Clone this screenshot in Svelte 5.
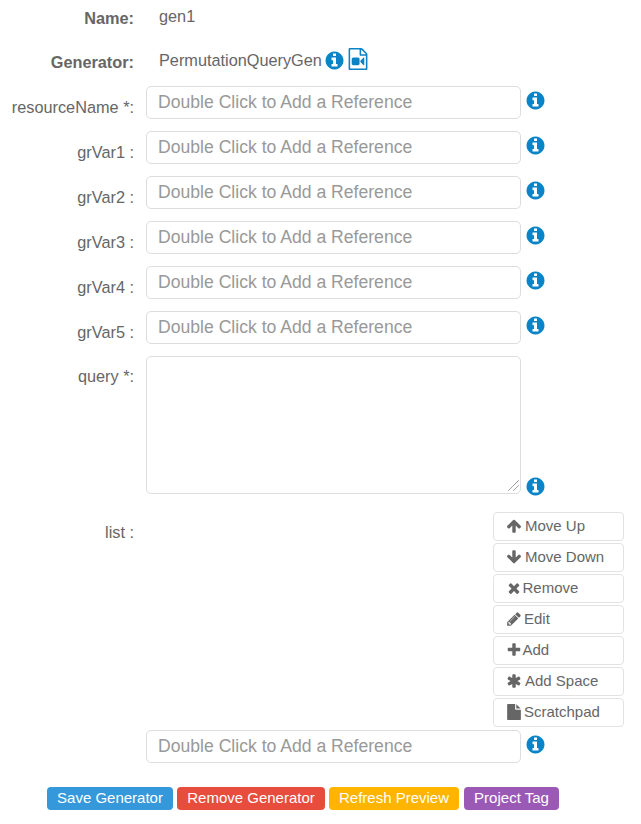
<script>
	const icons = {
		info: 'M1152 1376v-160q0-14-9-23t-23-9h-96v-512q0-14-9-23t-23-9h-320q-14 0-23 9t-9 23v160q0 14 9 23t23 9h96v320h-96q-14 0-23 9t-9 23v160q0 14 9 23t23 9h448q14 0 23-9t9-23zm-128-896v-160q0-14-9-23t-23-9h-192q-14 0-23 9t-9 23v160q0 14 9 23t23 9h192q14 0 23-9t9-23zm640 416q0 209-103 385.500t-279.500 279.500-385.500 103-385.500-103-279.500-279.500-103-385.500 103-385.500 279.500-279.500 385.500-103 385.500 103 279.500 279.500 103 385.500z',
		video: 'M1596 380q28 28 48 76t20 88v1152q0 40-28 68t-68 28h-1344q-40 0-68-28t-28-68v-1600q0-40 28-68t68-28h896q40 0 88 20t76 48zm-444-244v376h376q-10-29-22-41l-313-313q-12-12-41-22zm384 1528v-1024h-416q-40 0-68-28t-28-68v-416h-768v1536h1280zm-640-896q52 0 90 38t38 90v384q0 52-38 90t-90 38h-384q-52 0-90-38t-38-90v-384q0-52 38-90t90-38h384zm492 2q20 8 20 30v576q0 22-20 30-8 2-12 2-14 0-23-9l-265-266v-90l265-266q9-9 23-9 4 0 12 2z',
		up: 'M1675 971q0 51-37 90l-75 75q-38 38-91 38-54 0-90-38l-294-293v704q0 52-37.500 84.500t-90.500 32.500h-128q-53 0-90.500-32.500t-37.500-84.500v-704l-294 293q-36 38-90 38t-90-38l-75-75q-38-38-38-90 0-53 38-91l651-651q35-37 90-37 54 0 91 37l651 651q37 39 37 91z',
		down: 'M1675 832q0 53-37 90l-651 652q-39 37-91 37-53 0-90-37l-651-652q-38-36-38-90 0-53 38-91l74-75q39-37 91-37 53 0 90 37l294 294v-704q0-52 38-90t90-38h128q52 0 90 38t38 90v704l294-294q37-37 90-37 52 0 91 37l75 75q37 39 37 91z',
		remove: 'M1490 1322q0 40-28 68l-136 136q-28 28-68 28t-68-28l-294-294-294 294q-28 28-68 28t-68-28l-136-136q-28-28-28-68t28-68l294-294-294-294q-28-28-28-68t28-68l136-136q28-28 68-28t68 28l294 294 294-294q28-28 68-28t68 28l136 136q28 28 28 68t-28 68l-294 294 294 294q28 28 28 68z',
		pencil: 'M491 1536l91-91-235-235-91 91v107h128v128h107zm523-928q0-22-22-22-10 0-17 7l-542 542q-7 7-7 17 0 22 22 22 10 0 17-7l542-542q7-7 7-17zm-54-192l416 416-832 832h-416v-416zm683 96q0 53-37 90l-166 166-416-416 166-165q36-38 90-38 53 0 91 38l235 234q37 39 37 91z',
		plus: 'M1600 736v192q0 40-28 68t-68 28h-416v416q0 40-28 68t-68 28h-192q-40 0-68-28t-28-68v-416h-416q-40 0-68-28t-28-68v-192q0-40 28-68t68-28h416v-416q0-40 28-68t68-28h192q40 0 68 28t28 68v416h416q40 0 68 28t28 68z',
		asterisk: 'M1546 1050q46 26 59.500 77.500t-12.500 97.500l-64 110q-26 46-77.500 59.500t-97.500-12.500l-266-153v307q0 52-38 90t-90 38h-128q-52 0-90-38t-38-90v-307l-266 153q-46 26-97.500 12.500t-77.500-59.500l-64-110q-26-46-12.500-97.500t59.500-77.500l266-154-266-154q-46-26-59.500-77.500t12.500-97.500l64-110q26-46 77.500-59.500t97.500 12.500l266 153v-307q0-52 38-90t90-38h128q52 0 90 38t38 90v307l266-153q46-26 97.500-12.500t77.500 59.500l64 110q26 46 12.500 97.500t-59.500 77.500l-266 154z',
		file: 'M1152 512v-472q22 14 36 28l408 408q14 14 28 36h-472zm-128 32q0 40 28 68t68 28h544v1056q0 40-28 68t-68 28h-1344q-40 0-68-28t-28-68v-1600q0-40 28-68t68-28h800v544z'
	};

	const placeholder = 'Double Click to Add a Reference';
	const refs = ['resourceName *:', 'grVar1 :', 'grVar2 :', 'grVar3 :', 'grVar4 :', 'grVar5 :'];

	// width is where the label starts after the icon
	const listActions = [
		{ icon: 'up', label: 'Move Up', width: 19 },
		{ icon: 'down', label: 'Move Down', width: 19 },
		{ icon: 'remove', label: 'Remove', width: 16.5 },
		{ icon: 'pencil', label: 'Edit', width: 18 },
		{ icon: 'plus', label: 'Add', width: 16.5 },
		{ icon: 'asterisk', label: 'Add Space', width: 19 },
		{ icon: 'file', label: 'Scratchpad', width: 18 }
	];

	const footer = [
		{ label: 'Save Generator', cls: 'save' },
		{ label: 'Remove Generator', cls: 'danger' },
		{ label: 'Refresh Preview', cls: 'refresh' },
		{ label: 'Project Tag', cls: 'tag' }
	];
</script>

{#snippet info()}
	<svg class="info" viewBox="0 0 1792 1792" aria-hidden="true"><path d={icons.info} /></svg>
{/snippet}

<div class="form">
	<div class="row static name-row">
		<span class="label strong">Name:</span>
		<span class="value">gen1</span>
	</div>
	<div class="row static generator-row">
		<span class="label strong">Generator:</span>
		<span class="value">
			PermutationQueryGen
			{@render info()}
			<svg class="video" viewBox="0 0 1792 1792" aria-hidden="true"><path d={icons.video} /></svg>
		</span>
	</div>

	{#each refs as name}
		<div class="row">
			<span class="label">{name}</span>
			<input type="text" {placeholder} />
			{@render info()}
		</div>
	{/each}

	<div class="row query-row">
		<span class="label">query *:</span>
		<div class="query-box">
			<textarea></textarea>
			<svg class="grip" viewBox="0 0 11 11" aria-hidden="true">
				<path d="M0.5 10.500 10.500 0.500M5.500 10.500 10.500 5.500" />
			</svg>
		</div>
		{@render info()}
	</div>

	<div class="list-row">
		<span class="label">list :</span>
		<div class="actions">
			{#each listActions as action}
				<button type="button" class="action">
					<span class="action-icon" style="width: {action.width}px">
						<svg viewBox="0 0 1792 1792" aria-hidden="true"><path d={icons[action.icon]} /></svg>
					</span>
					{action.label}
				</button>
			{/each}
		</div>
	</div>

	<div class="row last-row">
		<span class="label"></span>
		<input type="text" {placeholder} />
		{@render info()}
	</div>

	<div class="footer">
		{#each footer as item}
			<button type="button" class="footer-btn {item.cls}">{item.label}</button>
		{/each}
	</div>
</div>

<style>
	:global(body) {
		background: #fff;
	}

	.form {
		box-sizing: border-box;
		width: 641px;
		height: 824px;
		overflow: hidden;
		font-family: 'Liberation Sans', Arial, sans-serif;
		font-size: 16.3px;
		color: #666;
	}

	.row {
		display: grid;
		grid-template-columns: 134px 375px auto;
		column-gap: 12px;
		margin-bottom: 12px;
		justify-content: start;
	}

	.row > .info {
		margin-left: -8.5px;
		margin-top: 4px;
	}

	.row.static {
		grid-template-columns: 134px auto;
		column-gap: 25px;
		margin-bottom: 0;
	}

	.name-row {
		height: 49px;
		padding-top: 7px;
		box-sizing: border-box;
		line-height: 18px;
	}

	.generator-row {
		height: 37px;
		line-height: 22px;
		padding-top: 1px;
		box-sizing: border-box;
	}

	.label {
		text-align: right;
		line-height: 18px;
		padding-top: 12px;
	}

	.static .label {
		padding-top: 2px;
	}

	.generator-row .label {
		padding-top: 3px;
	}

	.strong {
		font-weight: 700;
	}

	.value {
		display: flex;
		align-items: center;
		gap: 2.5px;
		height: 22px;
		margin-top: -1px;
		align-self: start;
	}

	.name-row .value {
		height: 18px;
		margin-top: 0;
	}

	.info {
		width: 21px;
		height: 21px;
		fill: #0a84c6;
	}

	.video {
		width: 22px;
		height: 22px;
		fill: #0a84c6;
		margin-left: -1px;
		margin-top: -3px;
	}

	input,
	textarea {
		box-sizing: border-box;
		width: 375px;
		height: 33px;
		margin: 0;
		padding: 0 11px;
		border: 1px solid #ddd;
		border-radius: 5px;
		background: #fff;
		font-family: inherit;
		font-size: 17.6px;
		color: #666;
	}

	input::placeholder {
		color: #999;
		opacity: 1;
	}

	.query-box {
		position: relative;
		height: 138px;
	}

	textarea {
		display: block;
		height: 138px;
		resize: none;
	}

	.grip {
		position: absolute;
		right: 2px;
		bottom: 3px;
		width: 11px;
		height: 11px;
		fill: none;
		stroke: #555;
		stroke-width: 1;
		stroke-dasharray: 1 0.5;
	}

	.query-row {
		margin-bottom: 18px;
	}

	.query-row .label {
		padding-top: 11px;
	}

	.query-row > .info {
		align-self: end;
		margin-bottom: -3px;
	}

	.list-row {
		display: grid;
		grid-template-columns: 134px 478px;
		column-gap: 12px;
		margin-bottom: 3px;
	}

	.list-row .label {
		padding-top: 11px;
	}

	.actions {
		display: flex;
		flex-direction: column;
		align-items: flex-end;
		gap: 2px;
	}

	.action {
		display: flex;
		align-items: center;
		box-sizing: border-box;
		width: 131px;
		height: 29px;
		margin: 0;
		padding: 0 0 2px 12px;
		border: 1px solid #e2e2e2;
		border-radius: 4px;
		background: #fff;
		font-family: inherit;
		font-size: 15px;
		color: #666;
	}

	.action-icon {
		display: block;
		height: 16px;
		flex: none;
	}

	.action-icon svg {
		display: block;
		width: 16px;
		height: 16px;
		fill: #666;
	}

	.last-row {
		margin-bottom: 24px;
	}

	.footer {
		display: flex;
		gap: 4px;
		padding-left: 47px;
	}

	.footer-btn {
		box-sizing: border-box;
		height: 23px;
		margin: 0;
		padding: 0 0 1px;
		border: 0;
		border-radius: 4px;
		font-family: inherit;
		font-size: 15px;
		line-height: 22px;
		color: #fff;
	}

	.save {
		width: 126px;
		background: #3498db;
	}

	.danger {
		width: 148px;
		background: #e74c3c;
	}

	.refresh {
		width: 130px;
		background: #ffb400;
	}

	.tag {
		width: 95px;
		margin-left: 1px;
		background: #9b59b6;
	}
</style>
